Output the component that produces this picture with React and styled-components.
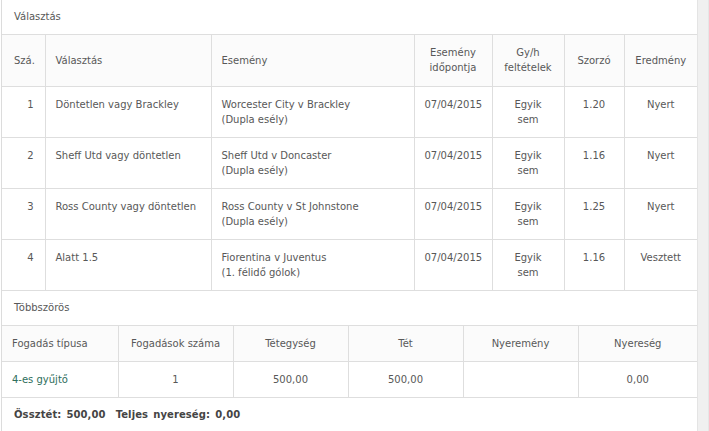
import React from "react";
import styled, { createGlobalStyle } from "styled-components";

const Global = createGlobalStyle`
  html, body { margin: 0; padding: 0; background: #fff; }
  body { font-family: "DejaVu Sans", Verdana, sans-serif; font-size: 10px; color: #585858; }
`;

const Page = styled.div`
  display: flex;
  width: 709px;
  height: 431px;
  overflow: hidden;
  padding-left: 1px;
  box-sizing: border-box;
`;

const Panel = styled.div`
  flex: 1;
  border-left: 1px solid #dcdcdc;
  border-right: 1px solid #e4e4e4;
  display: flex;
  flex-direction: column;
`;

const Strip = styled.div`
  width: 10px;
  background: #f0f0f0;
  border-right: 1px solid #e6e6e6;
`;

const SectionTitle = styled.div`
  height: ${(p) => p.$h}px;
  line-height: ${(p) => p.$h}px;
  padding-left: 12px;
  border-bottom: 1px solid #dedede;
  color: #585858;
`;

const Table = styled.table`
  width: 100%;
  border-collapse: collapse;
  table-layout: fixed;
`;

const Th = styled.th`
  font-weight: normal;
  color: #585858;
  background: #fbfbfb;
  border: 1px solid #dedede;
  border-top: none;
  padding: ${(p) => p.$pad || "10px 10px"};
  height: ${(p) => p.$h || "auto"};
  box-sizing: border-box;
  line-height: 15px;
  text-align: ${(p) => p.$align || "center"};
  vertical-align: middle;
  &:first-child { border-left: none; }
  &:last-child { border-right: none; }
`;

const Td = styled.td`
  color: #585858;
  border: 1px solid #dedede;
  padding: ${(p) => p.$pad || "10px 10px"};
  line-height: 15px;
  text-align: ${(p) => p.$align || "center"};
  vertical-align: top;
  &:first-child { border-left: none; }
  &:last-child { border-right: none; }
`;

const Link = styled.a`
  color: #2e6e5c;
  text-decoration: none;
`;

const Footer = styled.div`
  display: flex;
  gap: 10px;
  padding: 11px 12px;
  font-weight: bold;
  color: #444;
`;

const Stat = styled.span`
  word-spacing: 1.5px;
  letter-spacing: 0.1px;
`;

const rows = [
  ["1", "Döntetlen vagy Brackley", "Worcester City v Brackley", "(Dupla esély)", "1.20", "Nyert"],
  ["2", "Sheff Utd vagy döntetlen", "Sheff Utd v Doncaster", "(Dupla esély)", "1.16", "Nyert"],
  ["3", "Ross County vagy döntetlen", "Ross County v St Johnstone", "(Dupla esély)", "1.25", "Nyert"],
  ["4", "Alatt 1.5", "Fiorentina v Juventus", "(1. félidő gólok)", "1.16", "Vesztett"],
];

export default function App() {
  return (
    <>
      <Global />
      <Page>
        <Panel>
          <SectionTitle $h={34}>Választás</SectionTitle>
          <Table>
            <colgroup>
              <col style={{ width: 43 }} />
              <col style={{ width: 166 }} />
              <col style={{ width: 203 }} />
              <col style={{ width: 78 }} />
              <col style={{ width: 72 }} />
              <col style={{ width: 60 }} />
              <col />
            </colgroup>
            <thead>
              <tr>
                <Th $align="left" $pad="10px 6px 10px 12px" $h="51px">Szá.</Th>
                <Th $align="left">Választás</Th>
                <Th $align="left">Esemény</Th>
                <Th>Esemény<br />időpontja</Th>
                <Th>Gy/h<br />feltételek</Th>
                <Th>Szorzó</Th>
                <Th>Eredmény</Th>
              </tr>
            </thead>
            <tbody>
              {rows.map((r) => (
                <tr key={r[0]}>
                  <Td $align="right" $pad="10px 11px">{r[0]}</Td>
                  <Td $align="left">{r[1]}</Td>
                  <Td $align="left">{r[2]}<br />{r[3]}</Td>
                  <Td>07/04/2015</Td>
                  <Td>Egyik<br />sem</Td>
                  <Td>{r[4]}</Td>
                  <Td>{r[5]}</Td>
                </tr>
              ))}
            </tbody>
          </Table>
          <SectionTitle $h={34}>Többszörös</SectionTitle>
          <Table>
            <colgroup>
              <col style={{ width: 116 }} />
              <col style={{ width: 115 }} />
              <col style={{ width: 115 }} />
              <col style={{ width: 115 }} />
              <col style={{ width: 115 }} />
              <col />
            </colgroup>
            <thead>
              <tr>
                <Th $align="left">Fogadás típusa</Th>
                <Th>Fogadások száma</Th>
                <Th>Tétegység</Th>
                <Th>Tét</Th>
                <Th>Nyeremény</Th>
                <Th>Nyereség</Th>
              </tr>
            </thead>
            <tbody>
              <tr>
                <Td $align="left"><Link href="#">4-es gyűjtő</Link></Td>
                <Td>1</Td>
                <Td>500,00</Td>
                <Td>500,00</Td>
                <Td></Td>
                <Td>0,00</Td>
              </tr>
            </tbody>
          </Table>
          <Footer>
            <Stat>Össztét: 500,00</Stat>
            <Stat>Teljes nyereség: 0,00</Stat>
          </Footer>
        </Panel>
        <Strip />
      </Page>
    </>
  );
}
